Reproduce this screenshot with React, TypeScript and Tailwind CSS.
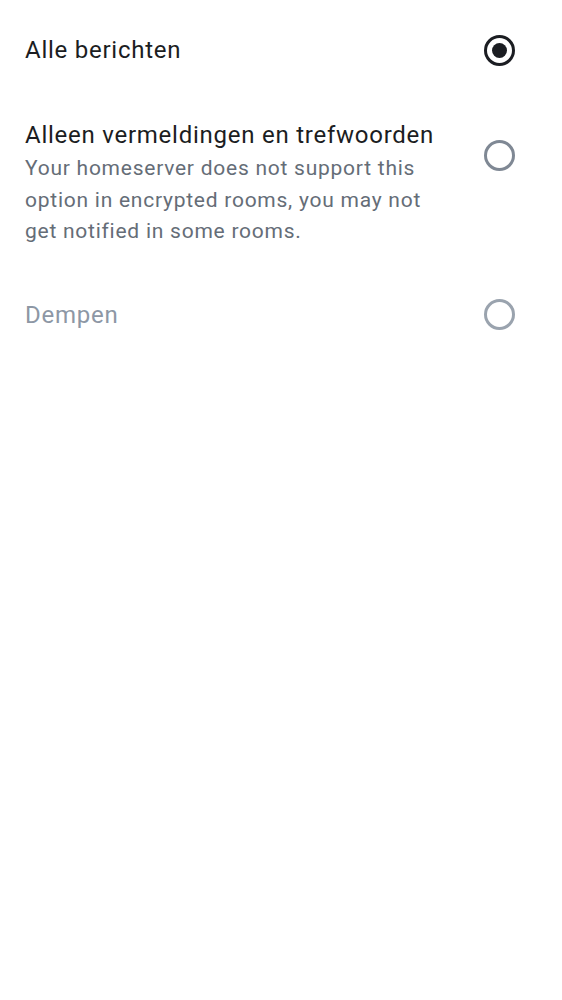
import React from 'react'

type Option = {
  title: string
  subtitle?: string
  selected?: boolean
  disabled?: boolean
}

const options: Option[] = [
  { title: 'Alle berichten', selected: true },
  {
    title: 'Alleen vermeldingen en trefwoorden',
    subtitle:
      'Your homeserver does not support this option in encrypted rooms, you may not get notified in some rooms.',
  },
  { title: 'Dempen', disabled: true },
]

const Radio: React.FC<{ selected?: boolean; disabled?: boolean }> = ({ selected, disabled }) => {
  if (selected) {
    return (
      <div className="w-[31px] h-[31px] rounded-full border-[3px] border-[#1b1d22] flex items-center justify-center">
        <div className="w-[15px] h-[15px] rounded-full bg-[#1b1d22]" />
      </div>
    )
  }
  return (
    <div
      className={
        disabled
          ? 'w-[31px] h-[31px] rounded-full border-[3px] border-[#9aa3ae]'
          : 'w-[31px] h-[31px] rounded-full border-[3px] border-[#7f8894]'
      }
    />
  )
}

export default function App() {
  return (
    <div className="min-h-[1000px] bg-white font-['Roboto',sans-serif]">
      <div className="flex flex-col pt-[36px]">
        {options.map((o, i) => (
          <div
            key={o.title}
            className={
              i === 0
                ? 'flex items-center pl-[25px] pr-[47px] gap-[36px] h-[28px]'
                : i === 1
                  ? 'flex items-start pl-[25px] pr-[47px] gap-[36px] mt-[57px]'
                  : 'flex items-center pl-[25px] pr-[47px] gap-[36px] h-[28px] mt-[53px]'
            }
          >
            <div className="flex-1 flex flex-col">
              <span
                className={
                  o.disabled
                    ? 'text-[24px] leading-[28px] text-[#8d97a5] tracking-[0.75px] whitespace-nowrap'
                    : 'text-[24px] leading-[28px] text-[#1b1d22] tracking-[0.75px] whitespace-nowrap'
                }
              >
                {o.title}
              </span>
              {o.subtitle && (
                <span className="text-[21px] leading-[31.5px] text-[#656d77] tracking-[0.75px] mt-[4px]">
                  {o.subtitle}
                </span>
              )}
            </div>
            <div className={i === 1 ? 'mt-[19px]' : ''}>
              <Radio selected={o.selected} disabled={o.disabled} />
            </div>
          </div>
        ))}
      </div>
    </div>
  )
}
